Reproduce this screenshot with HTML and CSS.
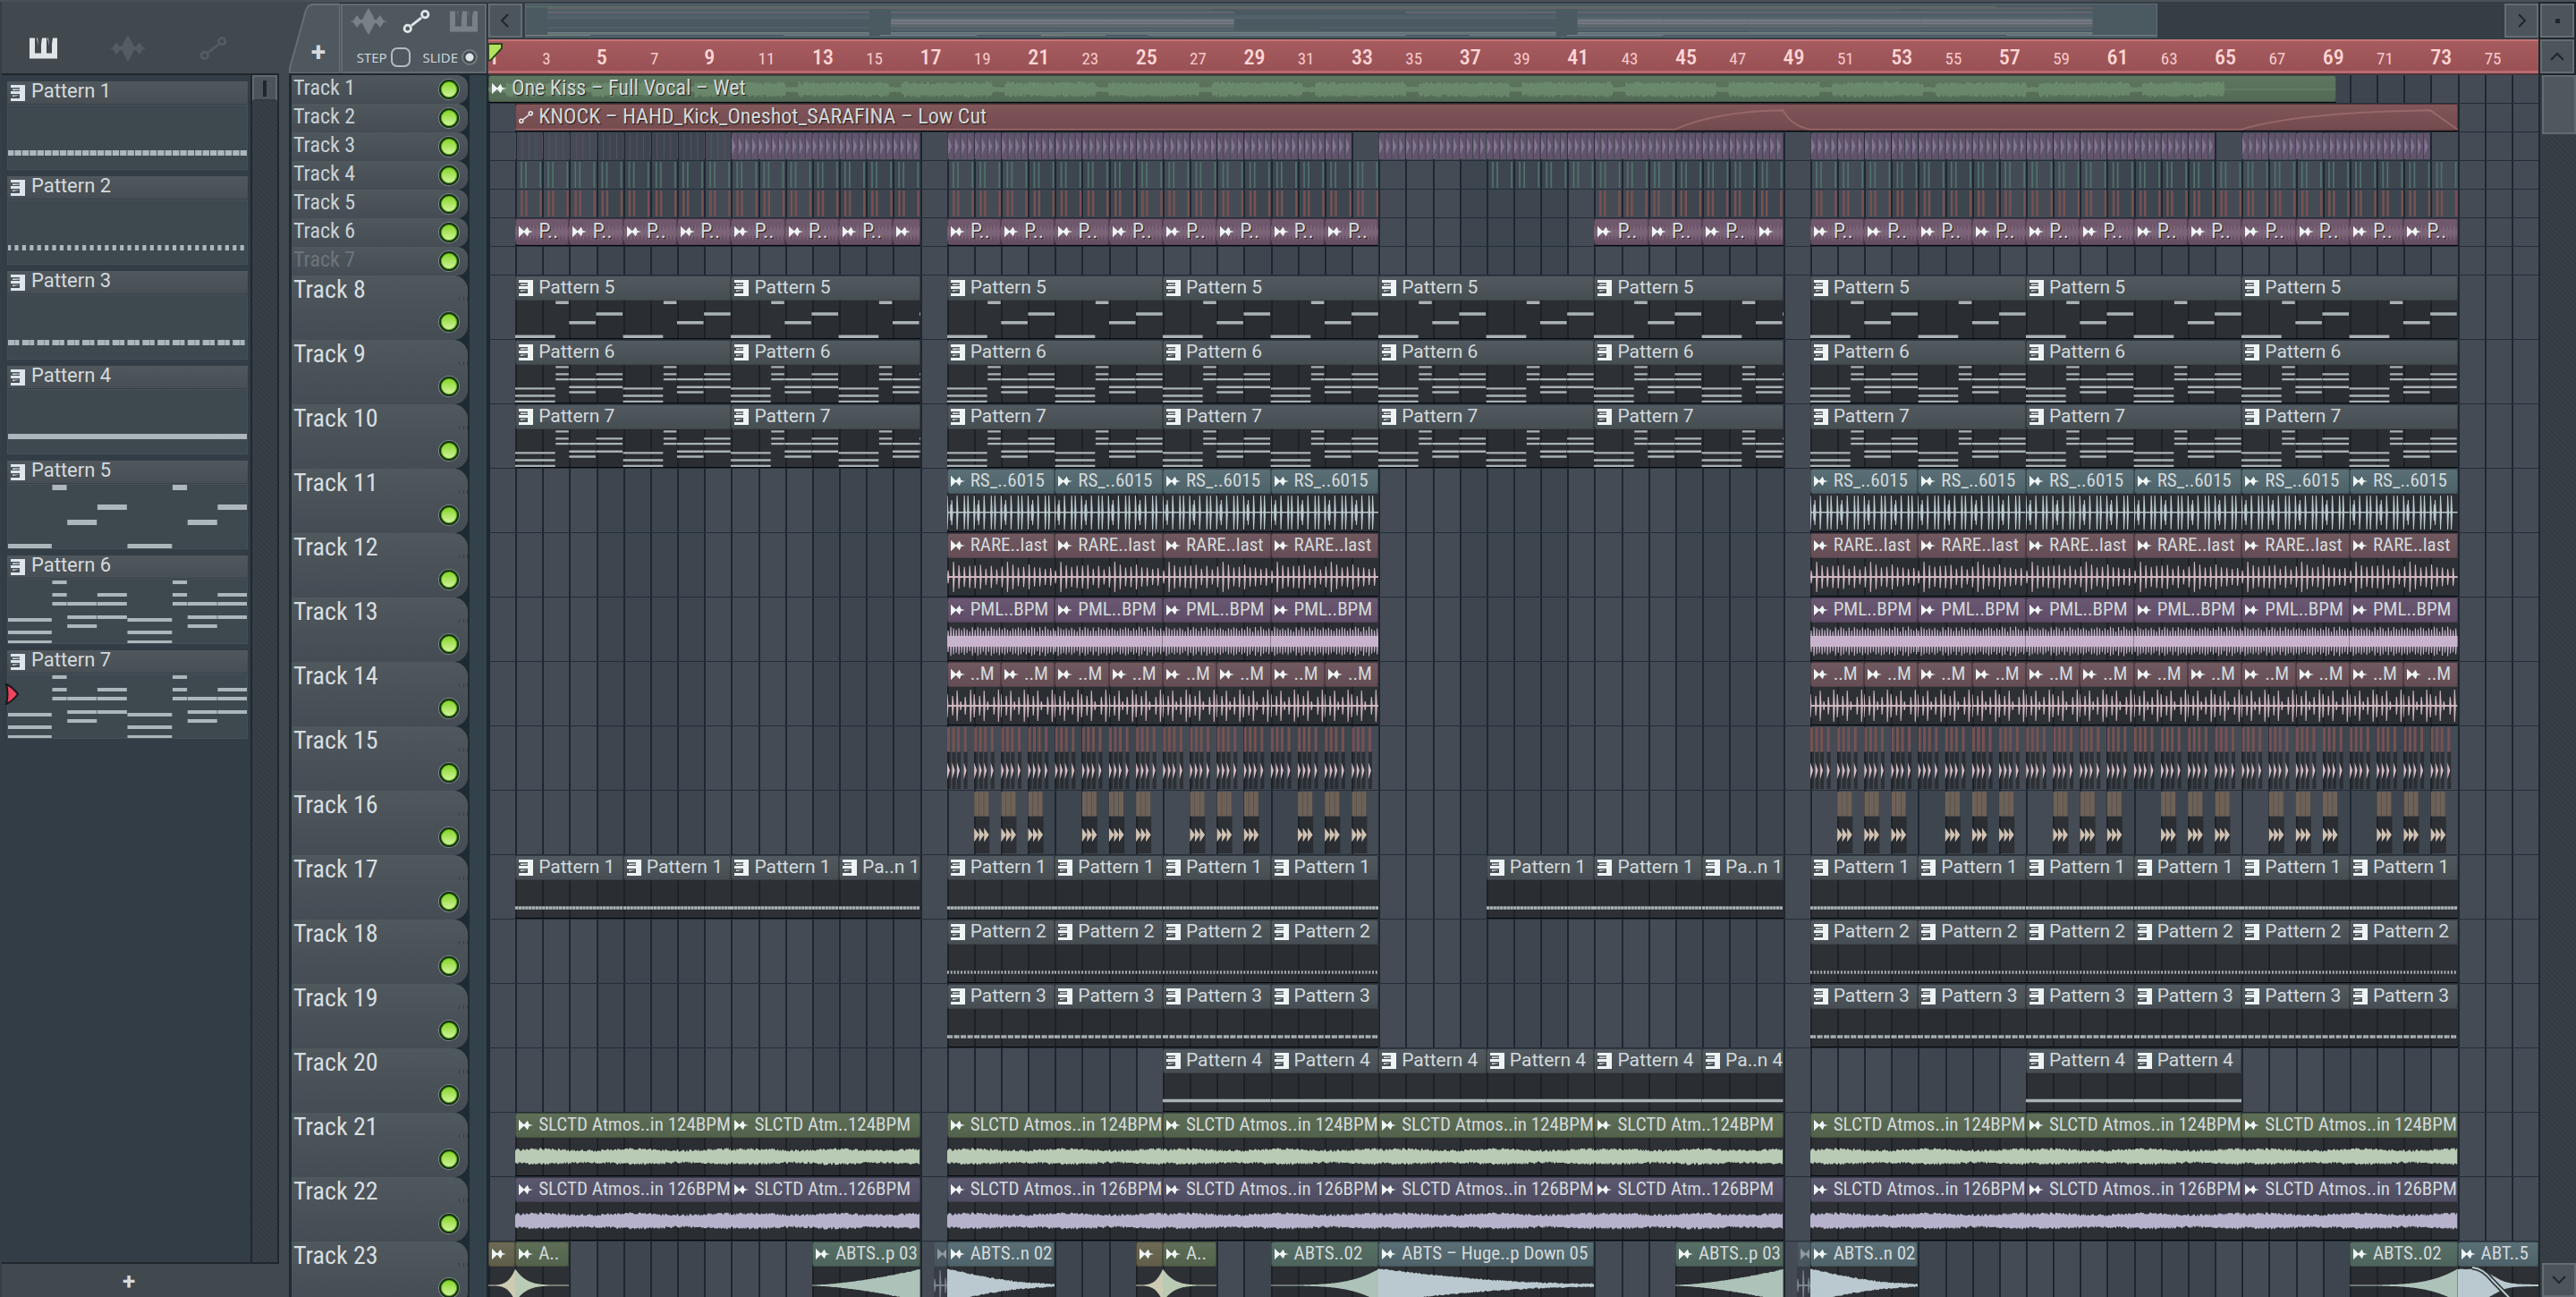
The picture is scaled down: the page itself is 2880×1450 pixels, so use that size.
FILE: index.html
```
<!DOCTYPE html>
<html lang="en">
<head>
    <meta charset="UTF-8">
    <meta name="viewport" content="width=device-width, initial-scale=1.0">
    <title>Playlist</title>
    <link rel="stylesheet" href="styles.css">
</head>
<body>
    <svg class="symbols" aria-hidden="true">
        <symbol id="icon-keys" viewBox="0 0 31 23"><path d="M0 0h6v17h7V7l1-7h5v17h6V7l1-7h5v23H0zM8 0h1l1 9zM20 0h1l1 9z"/></symbol>
        <symbol id="icon-wave" viewBox="0 0 42 30"><path d="M0 15l4-1 4-6 4 5 2 0 3-6 4-7 4 7 3 6 2 0 4-5 4 6 4 1-4 1-4 6-4-5-2 0-3 6-4 7-4-7-3-6-2 0-4 5-4-6z"/></symbol>
        <symbol id="icon-auto" viewBox="0 0 32 28"><g fill="none" stroke="currentColor" stroke-width="3"><circle cx="5.500" cy="22.500" r="4"/><circle cx="26.500" cy="5.500" r="4"/><path d="M10 19L22 9.500"/></g></symbol>
        <symbol id="icon-pattern" viewBox="0 0 16 18"><path d="M0 0h16v18H0v-3h10v-3.500L2 13v-1.500h8V10H0V7h10V5.500L2 6V4.500h8V3H0z"/></symbol>
        <symbol id="icon-audio" viewBox="0 0 18 16"><path d="M0 1l6 6h1l4-5 2 5 5 1-5 1-2 5-4-5H6l-6 6z"/></symbol>
    </svg>

    <div class="app">
        <aside class="browser">
            <div class="browser-tabs">
                <button class="icon-button active" aria-label="Patterns"><svg class="icon-lg"><use href="#icon-keys"/></svg></button>
                <button class="icon-button dim" aria-label="Audio clips"><svg class="icon-xl"><use href="#icon-wave"/></svg></button>
                <button class="icon-button dim" aria-label="Automation clips"><svg class="icon-lg"><use href="#icon-auto"/></svg></button>
            </div>
            <div class="browser-body">
                <div class="pattern-list" id="patterns"></div>
                <div class="scrollbar">
                    <button class="thumb-small" aria-label="Scroll patterns"><span></span></button>
                </div>
            </div>
            <button class="add-pattern" aria-label="Add pattern">+</button>
        </aside>

        <main class="playlist">
            <header class="toolbar">
                <div class="tools">
                    <button class="add-track" aria-label="Add track">
                        <svg class="tab-shape" viewBox="0 0 61 80" preserveAspectRatio="none"><path d="M1 80V74L20 8Q22 1 29 1H60V80z"/></svg>
                        <span>+</span>
                    </button>
                    <div class="tool-panel">
                        <div class="tool-row">
                            <button class="icon-button faded" aria-label="Audio"><svg class="icon-xl"><use href="#icon-wave"/></svg></button>
                            <button class="icon-button active" aria-label="Automation"><svg class="icon-lg"><use href="#icon-auto"/></svg></button>
                            <button class="icon-button faded" aria-label="Patterns"><svg class="icon-lg"><use href="#icon-keys"/></svg></button>
                        </div>
                        <div class="tool-row">
                            <label class="option">STEP<input type="checkbox" class="step"></label>
                            <label class="option">SLIDE<input type="radio" class="slide" checked></label>
                        </div>
                    </div>
                </div>
                <div class="time">
                    <div class="navigator">
                        <button class="nav-button" aria-label="Scroll left"><svg class="chevron" viewBox="0 0 18 18"><path d="M12 2L5 9l7 7"/></svg></button>
                        <div class="minimap"><div class="minimap-view" id="minimap"></div></div>
                        <button class="nav-button" aria-label="Scroll right"><svg class="chevron" viewBox="0 0 18 18"><path d="M6 2l7 7-7 7"/></svg></button>
                    </div>
                    <div class="ruler" id="ruler">
                        <svg class="playhead" viewBox="0 0 17 22"><path d="M0 1H15V6L3 19 0 20z"/></svg>
                    </div>
                </div>
                <div class="corner">
                    <button class="nav-button" aria-label="Zoom"><span class="dot"></span></button>
                    <button class="nav-button" aria-label="Scroll up"><svg class="chevron" viewBox="0 0 18 18"><path d="M2 13l7-7 7 7"/></svg></button>
                </div>
            </header>
            <div class="arrangement">
                <div class="heads" id="heads"></div>
                <div class="lanes" id="lanes"></div>
                <div class="scrollbar scrollbar-main">
                    <button class="thumb" aria-label="Scroll tracks"></button>
                    <button class="nav-button" aria-label="Scroll down"><svg class="chevron" viewBox="0 0 18 18"><path d="M2 5l7 7 7-7"/></svg></button>
                </div>
            </div>
        </main>
    </div>

    <script src="script.js"></script>
</body>
</html>
```

FILE: styles.css
```
* {
    margin: 0;
    padding: 0;
    box-sizing: border-box;
}

body {
    font-family: "Roboto Condensed", "Liberation Sans Narrow", Roboto, sans-serif;
    background: #41494f;
    color: #d3dadd;
    height: 100vh;
    overflow: hidden;
}

button {
    font-family: inherit;
    color: inherit;
    border: none;
    background: none;
    cursor: pointer;
}

svg {
    display: block;
    fill: currentColor;
}

.symbols {
    display: none;
}

.app {
    display: flex;
    gap: 11px;
    height: 100vh;
    border-top: 2px solid #4a5258;
}

/* Pattern browser */

.browser {
    width: 312px;
    display: flex;
    flex-direction: column;
    border-left: 2px solid #353d45;
}

.browser-tabs {
    height: 80px;
    display: flex;
    align-items: flex-end;
    gap: 53px;
    padding: 0 25px 12px;
}

.icon-button {
    width: 42px;
    height: 32px;
    display: flex;
    align-items: center;
    justify-content: center;
}

.icon-lg {
    width: 31px;
    height: 26px;
}

.icon-xl {
    width: 42px;
    height: 30px;
}

.active {
    color: #e0e5e8;
}

.dim {
    color: #545c62;
}

.faded {
    color: #798186;
}

.browser-body {
    flex: 1;
    min-height: 0;
    display: flex;
    border-top: 2px solid #1f272d;
    border-right: 2px solid #1f272d;
}

.pattern-list {
    flex: 1;
    background: #333d45;
    padding: 7px 3px 0 6px;
    display: flex;
    flex-direction: column;
    gap: 7px;
    border-right: 2px solid #1f272d;
}

.pattern {
    height: 99px;
    position: relative;
}

.pattern-title {
    height: 26px;
    display: flex;
    align-items: center;
    gap: 7px;
    padding-left: 4px;
    background: linear-gradient(#50585d, #474e54);
    border-bottom: 1px solid #38424a;
    font-family: Roboto, sans-serif;
    font-size: 22px;
}

.pattern-title span {
    margin-bottom: 4px;
}

.pattern-notes {
    width: 100%;
    height: 73px;
    background: #3e484f;
    outline: 1px solid #465058;
    outline-offset: -1px;
    color: #acb6bb;
}

.icon-sm {
    width: 16px;
    height: 18px;
    flex: none;
    color: #dce6ec;
}

.selected-mark {
    position: absolute;
    left: -3px;
    top: 37px;
    width: 17px;
    height: 24px;
    fill: #f0435c;
    stroke: #16191f;
    stroke-width: 2;
}

.scrollbar {
    width: 28px;
    background: repeating-linear-gradient(45deg, #343b43 0 2px, #383f47 2px 4px);
}

.thumb-small {
    width: 28px;
    height: 29px;
    display: flex;
    align-items: center;
    justify-content: center;
    background: #4b545a;
    border: 2px solid #60696e;
    border-bottom-color: #333b42;
}

.thumb-small span {
    width: 4px;
    height: 18px;
    background: #1f272d;
}

.add-pattern {
    height: 39px;
    border-top: 2px solid #1f272d;
    padding-right: 26px;
    font: 700 26px/30px Roboto, sans-serif;
}

/* Toolbar */

.playlist {
    flex: 1;
    min-width: 0;
    display: flex;
    flex-direction: column;
}

.toolbar {
    height: 82px;
    display: flex;
}

.tools {
    width: 223px;
    display: flex;
    align-items: stretch;
    padding: 2px 2px 0 0;
    border-bottom: 2px solid #1f272d;
}

.add-track {
    width: 61px;
    position: relative;
    padding: 30px 0 0 8px;
    font: 700 30px/32px Roboto, sans-serif;
}

.add-track span {
    position: relative;
}

.tab-shape {
    position: absolute;
    inset: 0;
    width: 100%;
    height: 100%;
    fill: #4f585e;
    stroke: #666f75;
    stroke-width: 2;
}

.tool-panel {
    flex: 1;
    padding: 2px 2px 0 8px;
    background: #4f585e;
    border: 2px solid #626b71;
    outline: 1px solid #1f272d;
    display: flex;
    flex-direction: column;
    justify-content: space-between;
}

.tool-row {
    display: flex;
    align-items: center;
    justify-content: space-between;
}

.option {
    display: flex;
    align-items: center;
    gap: 4px;
    font: 500 15px/32px "Open Sans", sans-serif;
    padding: 0 6px 0 8px;
}

.step,
.slide {
    appearance: none;
    width: 22px;
    height: 22px;
    border: 2px solid #b4babd;
    border-radius: 7px;
}

.slide {
    width: 18px;
    height: 18px;
    border-color: #747c81;
    border-radius: 50%;
    background: radial-gradient(#e0e5e8 0 4px, #41494f 5px);
}

.time {
    flex: 1;
    min-width: 0;
}

.navigator {
    height: 42px;
    padding: 2px 0;
    display: flex;
    gap: 3px;
    background: #363d45;
}

.nav-button {
    width: 38px;
    height: 38px;
    flex: none;
    display: flex;
    align-items: center;
    justify-content: center;
    background: #4c555b;
    border: 2px solid #646d72;
}

.chevron {
    width: 18px;
    height: 18px;
    fill: none;
    stroke: #1f272d;
    stroke-width: 2;
}

.dot {
    width: 5px;
    height: 5px;
    background: #1f272d;
}

.minimap {
    flex: 1;
    min-width: 0;
}

.minimap-view {
    width: 82.6%;
    height: 38px;
    background: #4b5a61;
    border: 1px solid #5d6b72;
}

.minimap-view svg {
    width: 100%;
    height: 36px;
    opacity: 0.6;
}

.ruler {
    height: 40px;
    position: relative;
    display: grid;
    grid-template-columns: repeat(38, minmax(0, 1fr));
    align-items: baseline;
    padding-top: 5px;
    background: linear-gradient(#a65c5f, #985054);
    border-top: 2px solid #c87476;
    border-bottom: 2px solid #4a363e;
    box-shadow: inset 0 -3px 0 #bb6a6e;
    color: #f7c9c9;
    white-space: nowrap;
}

.ruler span {
    font-size: 19px;
    line-height: 26px;
}

.ruler .major {
    font-size: 24px;
    font-weight: 500;
    color: #ffd6d6;
}

.playhead {
    position: absolute;
    left: 0;
    top: 2px;
    width: 17px;
    height: 22px;
    fill: #b2e25e;
    stroke: #33431f;
    stroke-width: 2;
}

.corner {
    width: 42px;
    padding: 2px;
    display: flex;
    flex-direction: column;
    gap: 2px;
    background: #1f272d;
}

/* Tracks */

.arrangement {
    flex: 1;
    min-height: 0;
    display: flex;
    overflow: hidden;
}

.heads {
    width: 223px;
    padding-left: 3px;
    border-right: 2px solid #1b2a32;
    background: linear-gradient(to right, #1e2b33 202px, #33414a 202px);
}

.head {
    width: 197px;
    height: 32px;
    display: grid;
    grid-template-columns: 1fr 34px;
    padding-left: 2px;
    background: linear-gradient(#4f585d, #454c54);
    border-radius: 0 12px 12px 0;
    font-size: 24px;
    line-height: 28px;
    color: #c9d1d4;
}

.head.tall {
    height: 72px;
    grid-template-rows: 36px 36px;
    font-size: 28px;
    line-height: 32px;
    color: #d8dee0;
    border-radius: 0 16px 16px 0;
}

.head.off {
    color: #6d757a;
}

.head .more {
    display: flex;
    gap: 4px;
    padding: 24px 0 0 24px;
}

.head .more i {
    width: 4px;
    height: 4px;
    background: #353c43;
}

.led {
    appearance: none;
    grid-column: 2;
    width: 22px;
    height: 22px;
    margin: 5px 0 0 2px;
    border: 2px solid #12340c;
    border-radius: 50%;
    background: linear-gradient(#84d425, #d5f5a2);
    box-shadow: 0 0 0 1px #80888b, inset 0 0 0 1px #5fae1a;
    cursor: pointer;
}

.head.tall .led {
    grid-row: 2;
}

.lanes {
    flex: 1;
    min-width: 0;
    background:
        repeating-linear-gradient(to right, #1e2731 0 2px, transparent 2px calc(100% / 76)),
        repeating-linear-gradient(to right, #444b55 0 calc(100% / 19), #3d454f calc(100% / 19) calc(200% / 19));
}

.lane {
    height: 32px;
    display: grid;
    grid-template-columns: repeat(304, minmax(0, 1fr));
    border-bottom: 1px solid #242e38;
}

.lane.tall {
    height: 72px;
}

.clip {
    min-width: 0;
    grid-row: 1;
    display: flex;
    flex-direction: column;
    overflow: hidden;
    border-bottom: 1px solid #06080b;
}

.clip-title {
    height: 28px;
    flex: none;
    display: flex;
    align-items: center;
    gap: 6px;
    padding-left: 3px;
    font-size: 21px;
    line-height: 24px;
    white-space: nowrap;
    overflow: hidden;
    color: #d3d9db;
    border: 1px solid rgba(0, 0, 0, 0.25);
    border-radius: 3px;
    background: linear-gradient(rgba(255, 255, 255, 0.04), rgba(0, 0, 0, 0.06)) var(--tint);
}

.clip-title span {
    margin-bottom: 3px;
}

.clip-title .icon-sm {
    color: #eef4f4;
}

.clip-title.notes {
    font-family: Roboto, sans-serif;
}

.clip-body {
    flex: 1;
    min-height: 0;
    width: 100%;
    background: rgba(30, 30, 30, 0.6);
    color: var(--wave, #a9b2b5);
}

.clip.short {
    position: relative;
}

.clip.short .clip-title {
    height: 30px;
    font-size: 24px;
    text-shadow: 1px 1px 1px #1c1c1c;
}

.clip.short .clip-body {
    position: absolute;
    left: 0;
    top: 2px;
    height: 28px;
    background: none;
    opacity: 0.5;
}

.clip.short .clip-title > * {
    z-index: 1;
}

.hits {
    width: 100%;
    height: 100%;
    grid-row: 1;
}

.ghost {
    opacity: 0.45;
}

.scrollbar-main {
    width: 42px;
    padding: 0 2px;
    border-left: 2px solid #1f272d;
    display: flex;
    flex-direction: column;
    justify-content: space-between;
}

.thumb {
    width: 38px;
    height: 66px;
    background: #4f585e;
    border: 2px solid #626b71;
}

.tint-pattern { --tint: #4a5359; --wave: #a9b2b5; }
.tint-vocal { --tint: #58705a; --wave: #7ba07d; }
.tint-auto { --tint: #7b4f53; --wave: #b57c7c; }
.tint-kick { --tint: #62546c; --wave: #817590; }
.tint-hat { --tint: #50706a; --wave: #50706a; }
.tint-snare { --tint: #765252; --wave: #d6bcc4; }
.tint-perc { --tint: #6b5267; --wave: #8d7589; }
.tint-steel { --tint: #536970; --wave: #b9c9cf; }
.tint-rose { --tint: #6b525a; --wave: #d0b7bf; }
.tint-plum { --tint: #64506c; --wave: #c8b4cc; }
.tint-tan { --tint: #6e6156; --wave: #d0c1b2; }
.tint-moss { --tint: #586850; --wave: #b9cbb5; }
.tint-violet { --tint: #545168; --wave: #b6b2cb; }
.tint-khaki { --tint: #66634d; --wave: #cdcbb2; }
.tint-sage { --tint: #526a61; --wave: #adc2b8; }
```

FILE: script.js
```
const BARS = 76;

// Note segments of the chord patterns: [start, length, [y positions]] in a 4 bar phrase of 32 steps
const MELODY = [[0, 12, [70]], [12, 4, [4]], [16, 8, [43]], [24, 8, [26]]];
const CHORDS = [[0, 12, [46, 60, 71]], [12, 4, [4, 18, 28]], [16, 8, [28, 43, 53]], [24, 8, [18, 28, 43]]];

function every(from, to, len) {
    const out = [];
    for (let b = from; b < to; b += len) out.push([b, Math.min(b + len, to)]);
    return out;
}

const MAIN = [[2, 17], [18, 34], [34, 49], [50, 74]];
const DROPS = [[18, 34], [50, 74]];

function clips(ranges, len, tint, kind, name, shortName) {
    return ranges.flatMap(([a, b]) => every(a, b, len).map(([s, e]) => ({
        s, e, tint, kind, name: e - s < len ? shortName : name
    })));
}

const swell = [
    { s: 1, e: 2, tint: 'khaki', kind: 'rise', name: '' },
    { s: 2, e: 4, tint: 'moss', kind: 'fall', name: 'A..' },
    { s: 13, e: 17, tint: 'sage', kind: 'ramp', name: 'ABTS..p 03' },
    { s: 17.5, e: 18, tint: 'steel', kind: 'rare', name: '', ghost: true },
    { s: 18, e: 22, tint: 'steel', kind: 'decay', name: 'ABTS..n 02' },
    { s: 25, e: 26, tint: 'khaki', kind: 'rise', name: '' },
    { s: 26, e: 28, tint: 'moss', kind: 'fall', name: 'A..' },
    { s: 30, e: 34, tint: 'sage', kind: 'rise', name: 'ABTS..02' },
    { s: 34, e: 42, tint: 'steel', kind: 'decay', name: 'ABTS – Huge..p Down 05' },
    { s: 45, e: 49, tint: 'sage', kind: 'ramp', name: 'ABTS..p 03' },
    { s: 49.5, e: 50, tint: 'steel', kind: 'rare', name: '', ghost: true },
    { s: 50, e: 54, tint: 'steel', kind: 'decay', name: 'ABTS..n 02' },
    { s: 70, e: 74, tint: 'sage', kind: 'rise', name: 'ABTS..02' },
    { s: 74, e: 77, tint: 'steel', kind: 'fade', name: 'ABT..5' }
];

const tracks = [
    { clips: [{ s: 1, e: 69.5, tint: 'vocal', kind: 'vocal', name: 'One Kiss – Full Vocal – Wet' }] },
    { clips: [{ s: 2, e: 74, tint: 'auto', kind: 'curve', name: 'KNOCK – HAHD_Kick_Oneshot_SARAFINA – Low Cut' }] },
    { hits: 'kick', ranges: [[2, 17], [18, 33], [34, 49], [50, 65], [66, 73]] },
    { hits: 'hat', ranges: [[2, 17], [18, 34], [38, 49], [50, 74]] },
    { hits: 'snare', ranges: [[2, 17], [18, 34], [42, 49], [50, 74]] },
    { clips: clips([[2, 17], [18, 34], [42, 49], [50, 74]], 2, 'perc', 'perc', 'P..', '') },
    { clips: [], off: true },
    { clips: clips(MAIN, 8, 'pattern', 'p5', 'Pattern 5', 'Pattern 5') },
    { clips: clips(MAIN, 8, 'pattern', 'p6', 'Pattern 6', 'Pattern 6') },
    { clips: clips(MAIN, 8, 'pattern', 'p7', 'Pattern 7', 'Pattern 7') },
    { clips: clips(DROPS, 4, 'steel', 'loop', 'RS_..6015') },
    { clips: clips(DROPS, 4, 'rose', 'rare', 'RARE..last') },
    { clips: clips(DROPS, 4, 'plum', 'dense', 'PML..BPM') },
    { clips: clips(DROPS, 2, 'rose', 'top', '..M') },
    { hits: 'clap', ranges: DROPS },
    { hits: 'roll', ranges: DROPS },
    { clips: clips([[2, 17], [18, 34], [38, 49], [50, 74]], 4, 'pattern', 'p1', 'Pattern 1', 'Pa..n 1') },
    { clips: clips(DROPS, 4, 'pattern', 'p2', 'Pattern 2') },
    { clips: clips(DROPS, 4, 'pattern', 'p3', 'Pattern 3') },
    { clips: clips([[26, 49], [58, 66]], 4, 'pattern', 'p4', 'Pattern 4', 'Pa..n 4') },
    { clips: clips(MAIN, 8, 'moss', 'pad', 'SLCTD Atmos..in 124BPM', 'SLCTD Atm..124BPM') },
    { clips: clips(MAIN, 8, 'violet', 'pad', 'SLCTD Atmos..in 126BPM', 'SLCTD Atm..126BPM') },
    { clips: swell }
];

function rect(x, y, w, h) {
    return `M${x} ${y}h${w}v${h}h${-w}z`;
}

// Small seeded generator so the waveforms look the same on every load
function random(seed) {
    let n = seed;
    return () => (n = (n * 16807) % 2147483647) / 2147483647;
}

function notePath(kind, bars) {
    const end = bars * 8;
    let d = '';
    if (kind === 'p5' || kind === 'p6' || kind === 'p7') {
        const h = kind === 'p5' ? 6 : 4;
        for (let t = 0; t < end; t += 32) {
            for (const [s, len, ys] of kind === 'p5' ? MELODY : CHORDS) {
                ys.forEach(y => { d += rect(t + s, y - h / 2, len - 0.15, h); });
            }
        }
        return d;
    }
    for (let t = 0; t < end; t++) {
        if (kind === 'p1') d += rect(t, 51, 0.88, 6);
        if (kind === 'p2') d += rect(t, 51, 0.5, 6);
        if (kind === 'p3') d += rect(t, 51, t % 2 ? 0.6 : 0.95, 6);
        if (kind === 'p4') d += rect(t, 50, 1, 6);
    }
    return d;
}

function spikes(list, mid) {
    return list.map(([x, a]) => `M${x - 1} ${mid}L${x - 0.5} ${mid - a}h1L${x + 1.5} ${mid}L${x + 0.5} ${mid + a}h-1z`).join('');
}

function wavePath(kind, bars) {
    const w = bars * 30;
    const mid = 21;
    const rnd = random(bars * 97 + kind.length * 1313);
    const list = [];
    if (kind === 'loop') {
        const steps = [0, 4, 11, 19, 23];
        for (let x = 0; x < w; x += 30) steps.forEach((s, i) => list.push([x + s, i === 1 ? 9 : 19]));
        for (let x = 5; x < w; x += 30) list.push([x, 14]);
        return spikes(list, mid) + rect(0, mid - 1, w, 1.5);
    }
    if (kind === 'rare') {
        for (let x = 1; x < w; x += 6) list.push([x, x % 60 === 7 ? 17 : 7 + rnd() * 7]);
        return spikes(list, mid) + rect(0, mid - 1, w, 2);
    }
    if (kind === 'top') {
        [0, 6, 11, 15, 20, 26, 30, 36, 41, 45, 52, 57].forEach((s, i) => list.push([s, [13, 11, 17, 5, 10, 18][i % 6]]));
        return spikes(list, mid) + rect(0, mid - 1, w, 2);
    }
    if (kind === 'dense') {
        for (let x = 1; x < w; x += 3) list.push([x, 11 + (x % 5) + rnd() * 2]);
        return spikes(list, mid) + rect(0, mid - 6, w, 12);
    }
    // the rest are filled outlines
    const amp = x => {
        const p = x / w;
        if (kind === 'pad') return 6 + Math.sin(p * 14) * 0.8 + rnd() * 3;
        if (kind === 'vocal') {
            if (x > 1930) return 0.7;
            const gap = (x % 115) > 100 || x < 20;
            return gap ? 3 + rnd() * 2 : 8 + rnd() * 6;
        }
        if (kind === 'perc') return x % 4 < 2 ? 11 + rnd() * 3 : 5;
        if (kind === 'rise') return 0.5 + 18 * Math.pow(p, 4);
        if (kind === 'fall') return 0.5 + 18 * Math.pow(1 - p, 5);
        if (kind === 'ramp') return 0.5 + 17 * Math.pow(p, 1.6) + rnd() * p;
        if (kind === 'decay') return 1 + 17 * Math.pow(1 - p, 1.8) + rnd() * 1.5;
        if (kind === 'fade') return 1 + 17 / (1 + Math.exp((p - 0.45) * 12)) + rnd() * (1 - p);
        return 8;
    };
    let top = '';
    let bottom = '';
    for (let x = 0; x <= w; x++) {
        top += `L${x} ${(mid - amp(x)).toFixed(1)}`;
        bottom = `L${x} ${(mid + amp(x)).toFixed(1)}` + bottom;
    }
    return `M0 ${mid}${top}${bottom}z`;
}

function svg(cls, w, h, inner) {
    return `<svg class="${cls}" viewBox="0 0 ${w} ${h}" preserveAspectRatio="none">${inner}</svg>`;
}

function column(bar) {
    return Math.round((bar - 1) * 4) + 1;
}

function clipHtml(c, short) {
    const bars = c.e - c.s;
    const isPattern = c.tint === 'pattern';
    let body;
    if (isPattern) {
        body = svg('clip-body', bars * 8, 73, `<path d="${notePath(c.kind, bars)}"/>`);
    } else if (c.kind === 'curve') {
        body = svg('clip-body', 72, 42, '<path d="M0 40H43Q44.500 10 47 8Q47.300 34 48 40H64Q66 12 71 8L72 40" fill="none" stroke="currentColor" stroke-width="2" vector-effect="non-scaling-stroke"/>');
    } else {
        const fadeLine = c.kind === 'fade' ? '<path d="M16 1Q28 2 38 15L64 42" fill="none" stroke="#2b3033" stroke-width="5"/><path d="M16 1Q28 2 38 15L64 42" fill="none" stroke="currentColor" stroke-width="2"/>' : '';
        body = svg('clip-body', bars * 30, 42, `<path d="${wavePath(c.kind, bars)}"/>${fadeLine}`);
    }
    const icon = isPattern ? 'pattern' : c.kind === 'curve' ? 'auto' : 'audio';
    return `<div class="clip tint-${c.tint}${short ? ' short' : ''}${c.ghost ? ' ghost' : ''}" style="grid-column: ${column(c.s)} / ${column(c.e)}">
        <div class="clip-title${isPattern ? ' notes' : ''}"><svg class="icon-sm"><use href="#icon-${icon}"/></svg><span>${c.name}</span></div>${body}</div>`;
}

function hitsHtml(kind, [from, to], tall) {
    const h = tall ? 72 : 32;
    const w = (to - from) * 30;
    let heads = '', bodies = '', waves = '';
    for (let b = from; b < to; b++) {
        const x = (b - from) * 30;
        if (kind === 'kick') {
            for (let i = 0; i < 4; i++) {
                const k = x + i * 7.5;
                if (b < 10) {
                    heads += rect(k, 1, 0.8, 30);
                } else {
                    heads += rect(k + 0.5, 1, 6.5, 30);
                    waves += `M${k + 1} 6L${k + 5} 16L${k + 1} 26z`;
                }
            }
        } else if (kind === 'hat') {
            [6, 11, 27].forEach(s => { heads += rect(x + s, 1, 1.8, 30); });
        } else if (kind === 'snare') {
            [6, 11, 27].forEach(s => { heads += rect(x + s, 1, 2.5, 30); });
        } else if (kind === 'clap') {
            [0, 5.5, 11, 18.5].forEach(s => {
                heads += rect(x + s, 1, 3, 28);
                bodies += rect(x + s, 29, 4, 42);
                waves += `M${x + s} 41L${x + s + 3} 50L${x + s} 60z`;
            });
        } else if ((b - 18) % 4) {
            [0, 5.5, 11].forEach(s => {
                heads += rect(x + s, 1, 5, 28);
                waves += `M${x + s} 42L${x + s + 5.5} 50L${x + s} 58z`;
            });
            bodies += rect(x, 29, 17, 42);
        }
    }
    const tint = { kick: 'kick', hat: 'hat', snare: 'snare', clap: 'snare', roll: 'tan' }[kind];
    return `<svg class="hits tint-${tint}" viewBox="0 0 ${w} ${h}" preserveAspectRatio="none" style="grid-column: ${column(from)} / ${column(to)}">
        <path d="${bodies}" fill="rgba(30,30,30,.6)"/><path d="${heads}" fill="var(--tint)"/><path d="${waves}" fill="var(--wave)"/></svg>`;
}

const heads = document.getElementById('heads');
const lanes = document.getElementById('lanes');
let map = '';

tracks.forEach((t, i) => {
    const tall = i > 6;
    const n = i + 1;
    heads.insertAdjacentHTML('beforeend', `<div class="head${tall ? ' tall' : ''}${t.off ? ' off' : ''}">
        <label for="led${n}">Track ${n}</label>
        <input type="checkbox" class="led" id="led${n}" checked>
        ${tall ? '<div class="more"><i></i><i></i><i></i></div>' : ''}</div>`);

    const html = t.hits
        ? t.ranges.map(r => hitsHtml(t.hits, r, tall)).join('')
        : t.clips.map(c => clipHtml(c, !tall)).join('');
    lanes.insertAdjacentHTML('beforeend', `<div class="lane${tall ? ' tall' : ''}">${html}</div>`);

    // overview strip: one thin row for each track
    const spans = t.hits
        ? t.ranges.map(([s, e]) => ({ s, e, tint: t.hits === 'roll' ? 'tan' : t.hits === 'clap' ? 'snare' : t.hits }))
        : t.clips;
    spans.forEach(c => {
        const color = c.tint === 'pattern' ? '#6d7c84' : 'var(--wave)';
        map += `<path class="tint-${c.tint}" fill="${color}" opacity="${t.hits ? 0.3 : 0.6}" d="${rect(c.s - 1, 2 + i * 1.45, c.e - c.s, 1.2)}"/>`;
    });
});

document.getElementById('minimap').innerHTML = svg('', BARS, 36, map);

const ruler = document.getElementById('ruler');
for (let b = 1; b < BARS; b += 2) {
    ruler.insertAdjacentHTML('beforeend', `<span${b % 4 === 1 ? ' class="major"' : ''}>${b}</span>`);
}

const list = document.getElementById('patterns');
for (let n = 1; n <= 7; n++) {
    const bars = n > 4 ? 8 : 4;
    list.insertAdjacentHTML('beforeend', `<div class="pattern">
        <div class="pattern-title"><svg class="icon-sm"><use href="#icon-pattern"/></svg><span>Pattern ${n}</span></div>
        ${svg('pattern-notes', bars * 8, 73, `<path d="${notePath('p' + n, bars)}"/>`)}
        ${n === 7 ? '<svg class="selected-mark" viewBox="0 0 17 24"><path d="M2 1Q5 12 2 23Q9 20 15 12Q9 4 2 1z"/></svg>' : ''}
    </div>`);
}
```
